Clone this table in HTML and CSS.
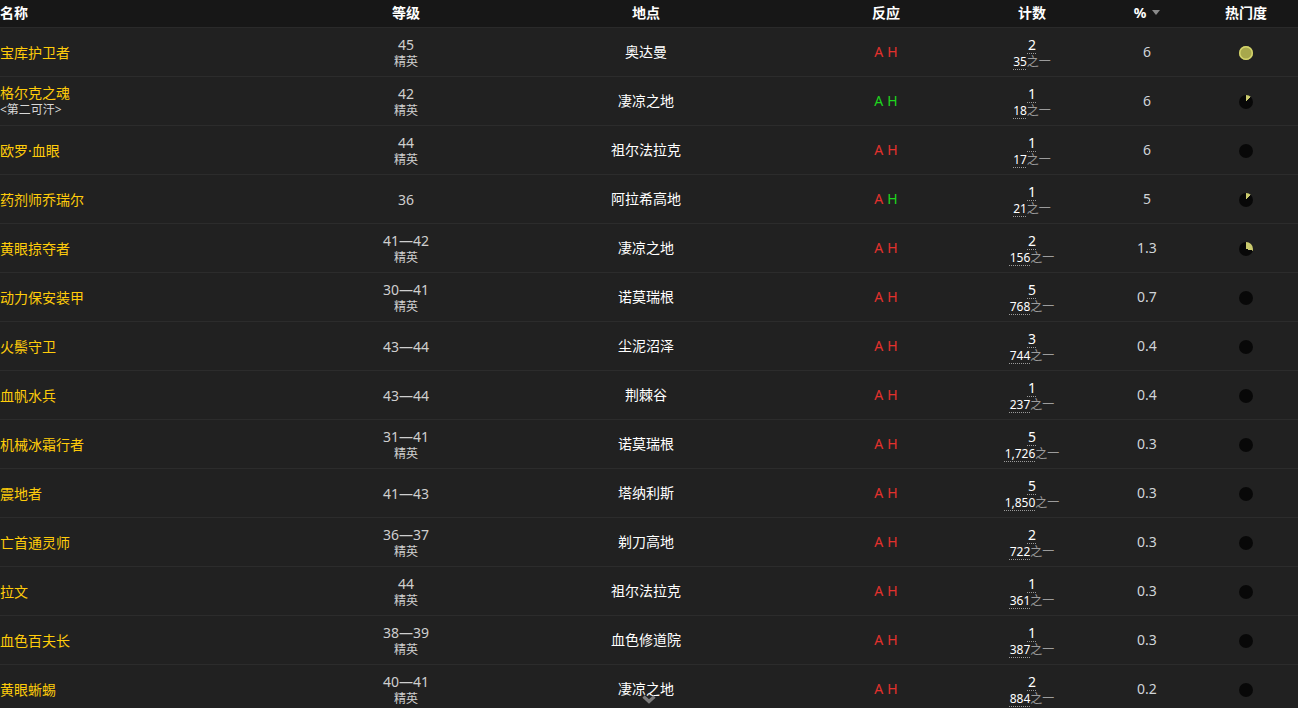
FILE: index.html
```html
<!DOCTYPE html>
<html lang="zh-CN">
<head>
<meta charset="utf-8">
<title>NPC 列表</title>
<link rel="stylesheet" href="styles.css">
</head>
<body>
<div class="table">
  <div class="row head">
    <div class="c name">名称</div>
    <div class="c">等级</div>
    <div class="c">地点</div>
    <div class="c">反应</div>
    <div class="c">计数</div>
    <div class="c pcth">%<span class="tri"></span></div>
    <div class="c">热门度</div>
  </div>

  <div class="row">
    <div class="c name"><span class="nm">宝库护卫者</span></div>
    <div class="c lv"><span>45</span><span class="sub">精英</span></div>
    <div class="c loc">奥达曼</div>
    <div class="c re"><span class="r">A</span><span class="r">H</span></div>
    <div class="c cnt"><span class="u">2</span><span class="tot"><span class="u">35</span><span class="of">之一</span></span></div>
    <div class="c pct">6</div>
    <div class="c"><span class="pie full"></span></div>
  </div>

  <div class="row">
    <div class="c name"><span class="nm">格尔克之魂</span><span class="tag">&lt;第二可汗&gt;</span></div>
    <div class="c lv"><span>42</span><span class="sub">精英</span></div>
    <div class="c loc">凄凉之地</div>
    <div class="c re"><span class="g">A</span><span class="g">H</span></div>
    <div class="c cnt"><span class="u">1</span><span class="tot"><span class="u">18</span><span class="of">之一</span></span></div>
    <div class="c pct">6</div>
    <div class="c"><span class="pie" style="--a:40deg"></span></div>
  </div>

  <div class="row">
    <div class="c name"><span class="nm">欧罗·血眼</span></div>
    <div class="c lv"><span>44</span><span class="sub">精英</span></div>
    <div class="c loc">祖尔法拉克</div>
    <div class="c re"><span class="r">A</span><span class="r">H</span></div>
    <div class="c cnt"><span class="u">1</span><span class="tot"><span class="u">17</span><span class="of">之一</span></span></div>
    <div class="c pct">6</div>
    <div class="c"><span class="pie"></span></div>
  </div>

  <div class="row">
    <div class="c name"><span class="nm">药剂师乔瑞尔</span></div>
    <div class="c lv"><span>36</span></div>
    <div class="c loc">阿拉希高地</div>
    <div class="c re"><span class="r">A</span><span class="g">H</span></div>
    <div class="c cnt"><span class="u">1</span><span class="tot"><span class="u">21</span><span class="of">之一</span></span></div>
    <div class="c pct">5</div>
    <div class="c"><span class="pie" style="--a:40deg"></span></div>
  </div>

  <div class="row">
    <div class="c name"><span class="nm">黄眼掠夺者</span></div>
    <div class="c lv"><span>41—42</span><span class="sub">精英</span></div>
    <div class="c loc">凄凉之地</div>
    <div class="c re"><span class="r">A</span><span class="r">H</span></div>
    <div class="c cnt"><span class="u">2</span><span class="tot"><span class="u">156</span><span class="of">之一</span></span></div>
    <div class="c pct">1.3</div>
    <div class="c"><span class="pie" style="--a:105deg"></span></div>
  </div>

  <div class="row">
    <div class="c name"><span class="nm">动力保安装甲</span></div>
    <div class="c lv"><span>30—41</span><span class="sub">精英</span></div>
    <div class="c loc">诺莫瑞根</div>
    <div class="c re"><span class="r">A</span><span class="r">H</span></div>
    <div class="c cnt"><span class="u">5</span><span class="tot"><span class="u">768</span><span class="of">之一</span></span></div>
    <div class="c pct">0.7</div>
    <div class="c"><span class="pie"></span></div>
  </div>

  <div class="row">
    <div class="c name"><span class="nm">火鬃守卫</span></div>
    <div class="c lv"><span>43—44</span></div>
    <div class="c loc">尘泥沼泽</div>
    <div class="c re"><span class="r">A</span><span class="r">H</span></div>
    <div class="c cnt"><span class="u">3</span><span class="tot"><span class="u">744</span><span class="of">之一</span></span></div>
    <div class="c pct">0.4</div>
    <div class="c"><span class="pie"></span></div>
  </div>

  <div class="row">
    <div class="c name"><span class="nm">血帆水兵</span></div>
    <div class="c lv"><span>43—44</span></div>
    <div class="c loc">荆棘谷</div>
    <div class="c re"><span class="r">A</span><span class="r">H</span></div>
    <div class="c cnt"><span class="u">1</span><span class="tot"><span class="u">237</span><span class="of">之一</span></span></div>
    <div class="c pct">0.4</div>
    <div class="c"><span class="pie"></span></div>
  </div>

  <div class="row">
    <div class="c name"><span class="nm">机械冰霜行者</span></div>
    <div class="c lv"><span>31—41</span><span class="sub">精英</span></div>
    <div class="c loc">诺莫瑞根</div>
    <div class="c re"><span class="r">A</span><span class="r">H</span></div>
    <div class="c cnt"><span class="u">5</span><span class="tot"><span class="u">1,726</span><span class="of">之一</span></span></div>
    <div class="c pct">0.3</div>
    <div class="c"><span class="pie"></span></div>
  </div>

  <div class="row">
    <div class="c name"><span class="nm">震地者</span></div>
    <div class="c lv"><span>41—43</span></div>
    <div class="c loc">塔纳利斯</div>
    <div class="c re"><span class="r">A</span><span class="r">H</span></div>
    <div class="c cnt"><span class="u">5</span><span class="tot"><span class="u">1,850</span><span class="of">之一</span></span></div>
    <div class="c pct">0.3</div>
    <div class="c"><span class="pie"></span></div>
  </div>

  <div class="row">
    <div class="c name"><span class="nm">亡首通灵师</span></div>
    <div class="c lv"><span>36—37</span><span class="sub">精英</span></div>
    <div class="c loc">剃刀高地</div>
    <div class="c re"><span class="r">A</span><span class="r">H</span></div>
    <div class="c cnt"><span class="u">2</span><span class="tot"><span class="u">722</span><span class="of">之一</span></span></div>
    <div class="c pct">0.3</div>
    <div class="c"><span class="pie"></span></div>
  </div>

  <div class="row">
    <div class="c name"><span class="nm">拉文</span></div>
    <div class="c lv"><span>44</span><span class="sub">精英</span></div>
    <div class="c loc">祖尔法拉克</div>
    <div class="c re"><span class="r">A</span><span class="r">H</span></div>
    <div class="c cnt"><span class="u">1</span><span class="tot"><span class="u">361</span><span class="of">之一</span></span></div>
    <div class="c pct">0.3</div>
    <div class="c"><span class="pie"></span></div>
  </div>

  <div class="row">
    <div class="c name"><span class="nm">血色百夫长</span></div>
    <div class="c lv"><span>38—39</span><span class="sub">精英</span></div>
    <div class="c loc">血色修道院</div>
    <div class="c re"><span class="r">A</span><span class="r">H</span></div>
    <div class="c cnt"><span class="u">1</span><span class="tot"><span class="u">387</span><span class="of">之一</span></span></div>
    <div class="c pct">0.3</div>
    <div class="c"><span class="pie"></span></div>
  </div>

  <div class="row">
    <div class="c name"><span class="nm">黄眼蜥蜴</span></div>
    <div class="c lv"><span>40—41</span><span class="sub">精英</span></div>
    <div class="c loc">凄凉之地</div>
    <div class="c re"><span class="r">A</span><span class="r">H</span></div>
    <div class="c cnt"><span class="u">2</span><span class="tot"><span class="u">884</span><span class="of">之一</span></span></div>
    <div class="c pct">0.2</div>
    <div class="c"><span class="pie"></span></div>
  </div>
</div>

<div class="more">
  <svg width="14" height="9" viewBox="0 0 14 9"><path d="M1.5 1.5 L7 6.5 L12.5 1.5" fill="none" stroke="#7c7c7c" stroke-width="3.2"/></svg>
</div>
</body>
</html>
```

FILE: styles.css
```css
html, body {
  margin: 0;
  padding: 0;
  background: #212121;
  height: 708px;
  overflow: hidden;
}

body {
  font-family: "Noto Sans", "Noto Sans CJK SC", sans-serif;
  font-size: 14px;
  color: #fff;
  position: relative;
}

.table {
  width: 1298px;
}

.row {
  display: grid;
  grid-template-columns: 328px 156px 324px 156px 136px 94px 104px;
  height: 48px;
  border-bottom: 1px solid #2c2c2c;
  background: #212121;
}

.row.head {
  height: 27px;
  background: #171717;
  font-weight: bold;
  border-bottom: 1px solid #2a2a2a;
}

.c {
  display: flex;
  flex-direction: column;
  align-items: center;
  justify-content: center;
  line-height: 17px;
  white-space: nowrap;
}

.row.head .c {
  flex-direction: row;
  align-items: center;
  padding-bottom: 2px;
}

.c.name {
  align-items: flex-start;
}

.row.head .c.name {
  justify-content: flex-start;
  align-items: center;
}

.nm {
  color: #ffcc0a;
}

.tag {
  font-size: 12px;
  color: #d8d8d8;
}

.lv {
  color: #cfcfcf;
}

.lv > span:first-child {
  margin-top: 1px;
}

.sub {
  font-size: 12px;
  color: #cfcfcf;
}

.loc {
  color: #fff;
  padding-bottom: 1px;
}

.re {
  flex-direction: row;
  gap: 4px;
  padding-bottom: 1px;
}

.r { color: #e2312d; }
.g { color: #1ed51e; }

.cnt {
  color: #fff;
}

.u {
  text-decoration: underline dotted #9a9a9a;
  text-underline-offset: 3px;
  text-decoration-thickness: 1px;
}

.cnt > .u {
  margin-top: 1px;
}

.tot {
  font-size: 12px;
}

.of {
  color: #9c9c9c;
}

.pct {
  color: #d0d4d8;
  padding-bottom: 1px;
}

.pcth {
  gap: 6px;
}

.tri {
  width: 0;
  height: 0;
  border-left: 4px solid transparent;
  border-right: 4px solid transparent;
  border-top: 5px solid #8a8a8a;
}

.pie {
  width: 14px;
  height: 14px;
  border-radius: 50%;
  margin-top: 1px;
  background: conic-gradient(#cbcb6e 0 var(--a, 0deg), #080808 var(--a, 0deg) 360deg);
}

.pie.full {
  background: #a8a84c;
  box-shadow: inset 0 0 0 1.5px #d4d46c;
}

.more {
  position: absolute;
  left: 642px;
  top: 695px;
  width: 14px;
  height: 9px;
  display: flex;
}
```
